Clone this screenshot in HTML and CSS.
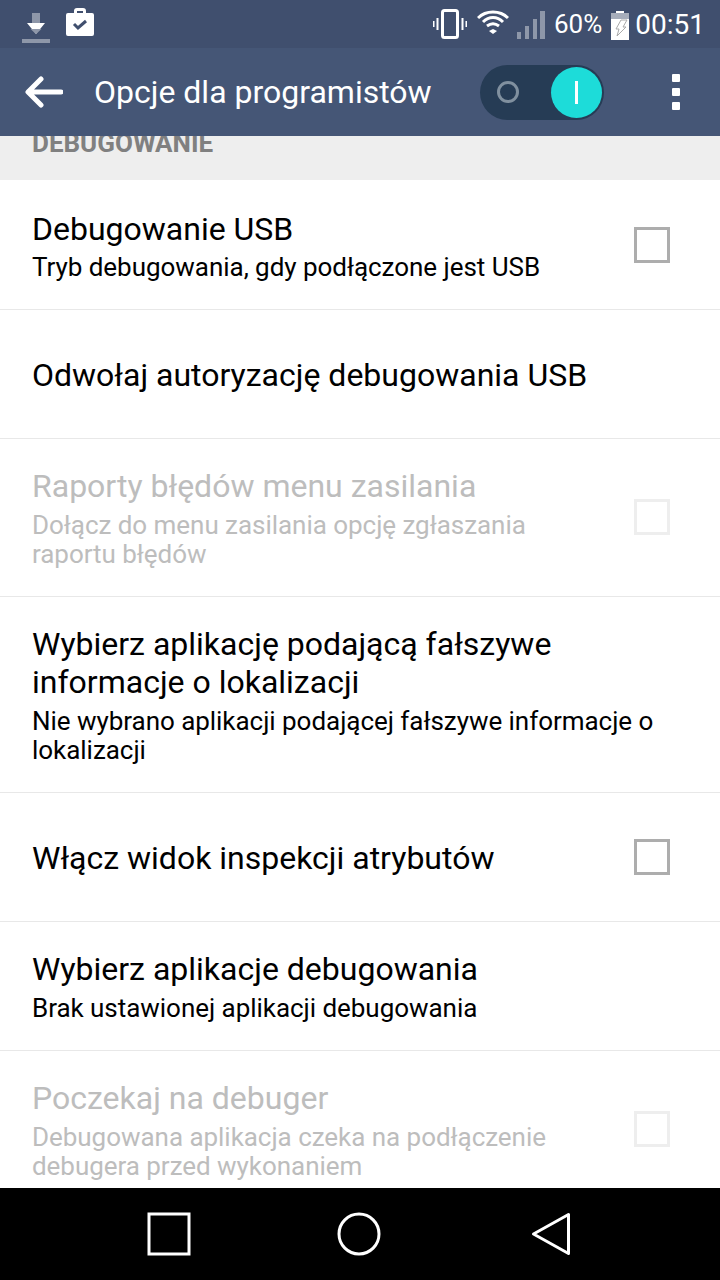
FILE: index.html
```html
<!DOCTYPE html>
<html lang="pl">
<head>
<meta charset="utf-8">
<title>Opcje dla programistów</title>
<link rel="stylesheet" href="styles.css">
</head>
<body>
<div class="screen">
  <header class="status">
    <div class="status-left">
      <svg class="ic-download" width="28" height="30" viewBox="0 0 28 30"><rect x="10" y="0" width="8" height="10" fill="#8e97a9"/><path d="M5 10h18L14 21z" fill="#fff"/><path d="M8.500 16h11L14 21z" fill="#8e97a9"/><rect x="0" y="26" width="28" height="4" fill="#8e97a9"/></svg>
      <svg class="ic-bag" width="28" height="28" viewBox="0 0 28 28"><path d="M8 5V3a3 3 0 0 1 3-3h6a3 3 0 0 1 3 3v2h6a2 2 0 0 1 2 2v19a2 2 0 0 1-2 2H2a2 2 0 0 1-2-2V7a2 2 0 0 1 2-2zM11 5h6V3h-6z" fill="#fff" fill-rule="evenodd"/><path d="M8 16l4 4 8-7" fill="none" stroke="#404f6e" stroke-width="3"/></svg>
    </div>
    <div class="status-right">
      <svg width="34" height="30" viewBox="0 0 34 30"><rect x="9.500" y="1.500" width="15" height="27" rx="2" fill="none" stroke="#fff" stroke-width="3"/><path d="M4.500 9v12M0.500 12v6M29.500 9v12M33.500 12v6" stroke="#fff" stroke-width="2"/></svg>
      <svg class="ic-wifi" width="32" height="25" viewBox="0 0 32 25"><path d="M1 9C9 1 23 1 31 9M6 13C12 7 20 7 26 13M10 17c4-3 8-3 12 0" fill="none" stroke="#fff" stroke-width="3"/><path d="M16 20l4 2-4 3-4-3z" fill="#fff"/></svg>
      <svg class="ic-signal" width="28" height="28" viewBox="0 0 28 28"><path d="M0 21h4v7H0zM8 15h4v13H8zM16 8h4v20h-4zM23 0h5v28h-5z" fill="#8e97a9"/></svg>
      <span class="batt-text">60%</span>
      <svg class="ic-batt" width="18" height="29" viewBox="0 0 18 29"><path d="M5 0h8v2h5v27H0V2h5z" fill="#fff"/><rect x="0" y="2" width="18" height="6" fill="#a6adbb"/><path d="M10 9h6l-4 7h3L6 25l2-7H5z" fill="#fff" stroke="#aaa" stroke-width="1"/></svg>
      <span class="clock">00:51</span>
    </div>
  </header>
  <div class="toolbar">
    <svg class="ic-back" width="38" height="32" viewBox="0 0 38 32"><path d="M36 16H4M16 3L3 16l13 13" fill="none" stroke="#fff" stroke-width="5" stroke-linecap="round" stroke-linejoin="round"/></svg>
    <h1 class="title">Opcje dla programistów</h1>
    <div class="toggle">
      <span class="toggle-off"></span>
      <span class="toggle-knob"><span class="toggle-bar"></span></span>
    </div>
    <div class="more"><span></span><span></span><span></span></div>
  </div>
  <main class="list">
    <div class="section"><span>DEBUGOWANIE</span></div>
    <div class="row h130">
      <div class="text"><div class="t">Debugowanie USB</div><div class="s">Tryb debugowania, gdy podłączone jest USB</div></div>
      <span class="check"></span>
    </div>
    <div class="row h129">
      <div class="text"><div class="t">Odwołaj autoryzację debugowania USB</div></div>
    </div>
    <div class="row off">
      <div class="text"><div class="t">Raporty błędów menu zasilania</div><div class="s">Dołącz do menu zasilania opcję zgłaszania<br>raportu błędów</div></div>
      <span class="check"></span>
    </div>
    <div class="row">
      <div class="text"><div class="t">Wybierz aplikację podającą fałszywe<br>informacje o lokalizacji</div><div class="s">Nie wybrano aplikacji podającej fałszywe informacje o<br>lokalizacji</div></div>
    </div>
    <div class="row h129">
      <div class="text"><div class="t">Włącz widok inspekcji atrybutów</div></div>
      <span class="check"></span>
    </div>
    <div class="row h129">
      <div class="text"><div class="t">Wybierz aplikacje debugowania</div><div class="s">Brak ustawionej aplikacji debugowania</div></div>
    </div>
    <div class="row off">
      <div class="text"><div class="t">Poczekaj na debuger</div><div class="s">Debugowana aplikacja czeka na podłączenie<br>debugera przed wykonaniem</div></div>
      <span class="check"></span>
    </div>
  </main>
  <nav class="nav">
    <svg width="44" height="44" viewBox="0 0 44 44"><rect x="2" y="2" width="40" height="40" fill="none" stroke="#fff" stroke-width="3"/></svg>
    <svg class="nav-home" width="44" height="44" viewBox="0 0 44 44"><circle cx="22" cy="22" r="20" fill="none" stroke="#fff" stroke-width="3"/></svg>
    <svg class="nav-back" width="40" height="44" viewBox="0 0 40 44"><path d="M37.500 2.500v39L2.500 22z" fill="none" stroke="#fff" stroke-width="3" stroke-linejoin="round"/></svg>
  </nav>
</div>
</body>
</html>
```
FILE: styles.css
```css
* { box-sizing: border-box; }
html, body { margin: 0; padding: 0; }
body { font-family: Roboto, "Noto Sans", sans-serif; background: #fff; }
.screen { width: 720px; height: 1280px; display: flex; flex-direction: column; overflow: hidden; }
.status { height: 48px; flex: none; background: #404f6e; display: flex; justify-content: space-between; align-items: center; padding: 0 15px 0 22px; color: #fff; }
.status-left { display: flex; align-items: center; gap: 16px; }
.ic-download { margin-top: 8px; }
.ic-bag { margin-top: -4px; }
.status-right { display: flex; align-items: center; gap: 0; }
.ic-wifi { margin-left: 10px; margin-bottom: 6px; }
.ic-signal { margin-left: 8px; margin-top: 2px; }
.batt-text { font-size: 26px; margin-left: 9px; }
.ic-batt { margin-left: 9px; margin-top: 2px; }
.clock { font-size: 28px; margin-left: 6px; }
.toolbar { height: 88px; flex: none; background: #455676; display: flex; align-items: center; padding-left: 25px; color: #fff; }
.title { margin: 0 0 0 31px; font-size: 32px; font-weight: 400; flex: 1; white-space: nowrap; }
.toggle { width: 124px; height: 55px; border-radius: 28px; background: #263c55; display: flex; align-items: center; justify-content: space-between; padding: 0 2px 0 17px; margin-right: 68px; }
.toggle-off { width: 22px; height: 22px; border-radius: 50%; border: 3px solid #80909f; }
.toggle-knob { width: 51px; height: 51px; border-radius: 50%; background: #1ddcd9; display: flex; align-items: center; justify-content: center; }
.toggle-bar { width: 3px; height: 23px; background: #fff; }
.more { display: flex; flex-direction: column; gap: 6px; margin-right: 40px; }
.more span { width: 8px; height: 8px; border-radius: 1px; background: #fff; }
.list { flex: 1; overflow: hidden; min-height: 0; }
.section { height: 44px; background: #eee; overflow: hidden; padding-left: 32px; }
.section span { display: block; font-size: 26px; font-weight: 700; color: #808080; line-height: 24px; margin-top: -5px; }
.row { display: flex; align-items: center; justify-content: space-between; padding: 28px 50px 26.500px 32px; border-bottom: 1px solid #e8e8e8; }
.h129 { min-height: 129px; }
.h130 { min-height: 130px; padding-top: 29px; padding-bottom: 25.500px; }
.text { min-width: 0; }
.t { font-size: 32px; line-height: 38px; color: #000; white-space: nowrap; }
.s { font-size: 26px; line-height: 29.500px; margin-top: 5.500px; color: #000; white-space: nowrap; letter-spacing: -.04px; }
.off .t, .off .s { color: #bdbdbd; }
.check { width: 36px; height: 36px; border: 3px solid #adadad; flex: none; margin-bottom: 2px; }
.off .check { border-color: #eee; }
.nav { height: 92px; flex: none; background: #000; display: flex; align-items: center; padding-left: 147px; }
.nav-home { margin-left: 146px; }
.nav-back { margin-left: 150px; }
```
